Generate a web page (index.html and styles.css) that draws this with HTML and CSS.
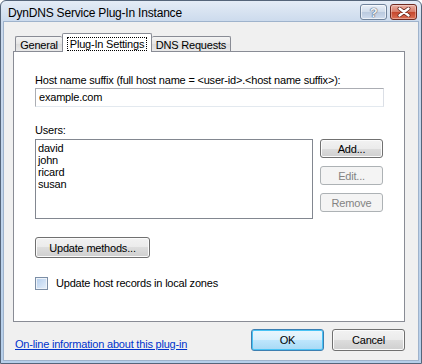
FILE: index.html
```html
<!DOCTYPE html>
<html lang="en">
<head>
    <meta charset="UTF-8">
    <title>DynDNS Service Plug-In Instance</title>
    <link rel="stylesheet" href="styles.css">
</head>
<body>

<div class="window">
    <div class="titlebar">
        <span class="title">DynDNS Service Plug-In Instance</span>
        <div class="caption-btns">
            <span class="cbtn help">?</span>
            <span class="cbtn close">
                <svg width="14" height="10" viewBox="0 0 14 10">
                    <path d="M2.5 1.5 L11.5 8.5 M11.5 1.5 L2.5 8.5" stroke="#5a1d12" stroke-width="3.8" stroke-linecap="round"/>
                    <path d="M2.5 1.5 L11.5 8.5 M11.5 1.5 L2.5 8.5" stroke="#fff" stroke-width="2.4" stroke-linecap="round"/>
                </svg>
            </span>
        </div>
    </div>

    <div class="client">
        <div class="tabs">
            <div class="tab tab-general">General</div>
            <div class="tab tab-active"><span class="focus">Plug-In Settings</span></div>
            <div class="tab tab-dns">DNS Requests</div>
        </div>

        <div class="panel">
            <div class="field-label">Host name suffix (full host name = &lt;user-id&gt;.&lt;host name suffix&gt;):</div>
            <div class="textbox">example.com</div>

            <div class="users-label">Users:</div>
            <div class="users-row">
                <div class="listbox">
                    <div class="item">david</div>
                    <div class="item">john</div>
                    <div class="item">ricard</div>
                    <div class="item">susan</div>
                </div>
                <div class="side-btns">
                    <button class="btn">Add...</button>
                    <button class="btn" disabled>Edit...</button>
                    <button class="btn" disabled>Remove</button>
                </div>
            </div>

            <button class="btn btn-methods">Update methods...</button>

            <div class="check-row">
                <span class="checkbox"></span>
                <span class="check-text">Update host records in local zones</span>
            </div>
        </div>

        <div class="footer">
            <a class="link" href="#">On-line information about this plug-in</a>
            <div class="footer-btns">
                <button class="btn btn-default">OK</button>
                <button class="btn">Cancel</button>
            </div>
        </div>
    </div>
</div>

</body>
</html>
```

FILE: styles.css
```css
body {
    margin: 0;
    font-family: "Liberation Sans", Arial, sans-serif;
    font-size: 11px;
    letter-spacing: -0.2px;
    color: #000;
}
.window {
    width: 422px;
    height: 364px;
    box-sizing: border-box;
    border: 1px solid #55657a;
    border-radius: 6px 6px 0 0;
    background: linear-gradient(#e4ecf6, #cad9ec 22px, #b6cfea);
    display: flex;
    flex-direction: column;
}
.titlebar {
    height: 21px;
    display: flex;
    align-items: center;
    justify-content: space-between;
    padding: 0 4px 0 7px;
}
.title {
    font-size: 12px;
    color: #000;
    margin-top: 2px;
}
.caption-btns {
    display: flex;
    gap: 3px;
    margin-top: 1px;
}
.cbtn {
    width: 27px;
    height: 16px;
    box-sizing: border-box;
    border-radius: 3px;
    display: flex;
    align-items: center;
    justify-content: center;
}
.help {
    border: 1px solid #70839b;
    background: linear-gradient(#eaf0f8, #cfdbea 50%, #b9c9de 50%, #cfdcee);
    color: #eef2f7;
    font-weight: bold;
    font-size: 13px;
    text-shadow: 0 0 1px #56667c, 0 0 1px #56667c, 0 0 1px #56667c;
    box-shadow: inset 0 0 0 1px rgba(255, 255, 255, 0.6);
}
.close {
    border: 1px solid #6e2a20;
    background: linear-gradient(#eab0a3, #d77a66 50%, #c4452b 50%, #dc7055);
    box-shadow: inset 0 0 0 1px rgba(255, 255, 255, 0.35);
}
.client {
    flex: 1;
    margin: 0 3px 3px 3px;
    background: #f0f0f0;
    box-shadow: 0 0 0 1px #9fb3cc;
    padding: 11px 13px 0 9px;
    display: flex;
    flex-direction: column;
}
.tabs {
    display: flex;
    align-items: flex-end;
    height: 18px;
    margin-left: 2px;
}
.tab {
    box-sizing: border-box;
    height: 15px;
    border: 1px solid #898c95;
    border-bottom: none;
    border-radius: 2px 2px 0 0;
    background: linear-gradient(#f4f4f4, #e6e6e6 50%, #dcdcdc 50%, #e9e9e9);
    display: flex;
    align-items: center;
    justify-content: center;
    padding-top: 1px;
}
.tab-general {
    width: 47px;
    border-right: none;
}
.tab-dns {
    width: 79px;
    border-left: none;
}
.tab-active {
    width: 90px;
    height: 19px;
    margin-bottom: -1px;
    background: #fff;
    position: relative;
    z-index: 1;
    padding-top: 0;
}
.focus {
    border: 1px dotted #000;
    padding: 0 2px;
    line-height: 12px;
    margin-top: 2px;
}
.panel {
    box-sizing: border-box;
    height: 271px;
    border: 1px solid #898c95;
    background: #fff;
    padding: 22px 0 0 21px;
}
.field-label {
    line-height: 13px;
}
.textbox {
    box-sizing: border-box;
    width: 349px;
    height: 19px;
    margin-top: 1px;
    border: 1px solid #abadb3;
    border-right-color: #dbdfe6;
    border-bottom-color: #e3e9ef;
    padding: 0 3px;
    line-height: 17px;
}
.users-label {
    margin-top: 17px;
    line-height: 13px;
}
.users-row {
    display: flex;
    margin-top: 2px;
}
.listbox {
    box-sizing: border-box;
    width: 278px;
    height: 80px;
    border: 1px solid #828790;
    padding: 2px 2px;
}
.item {
    line-height: 12px;
}
.side-btns {
    display: flex;
    flex-direction: column;
    gap: 8px;
    margin-left: 7px;
}
.side-btns .btn {
    width: 63px;
    height: 19px;
}
.btn {
    box-sizing: border-box;
    font-family: "Liberation Sans", Arial, sans-serif;
    font-size: 11px;
    letter-spacing: -0.2px;
    color: #000;
    padding: 0;
    border: 1px solid #707070;
    border-radius: 3px;
    background: linear-gradient(#f2f2f2, #ebebeb 50%, #dddddd 50%, #cfcfcf);
    box-shadow: inset 0 0 0 1px #fbfbfb;
}
.btn:disabled {
    border-color: #adb2b5;
    background: #f4f4f4;
    color: #838383;
    box-shadow: none;
}
.btn-methods {
    display: block;
    width: 115px;
    height: 21px;
    margin-top: 18px;
}
.check-row {
    display: flex;
    align-items: center;
    margin-top: 19px;
}
.checkbox {
    box-sizing: border-box;
    width: 13px;
    height: 13px;
    border: 1px solid #7b8ea6;
    background: linear-gradient(135deg, #b3cdec, #e6f0fb);
    box-shadow: inset 0 0 0 1px #eef3f9;
}
.check-text {
    margin-left: 8px;
    line-height: 13px;
}
.footer {
    display: flex;
    align-items: flex-end;
    justify-content: space-between;
    margin-top: 7px;
    padding-left: 2px;
}
.link {
    color: #0033cc;
    line-height: 13px;
}
.footer-btns {
    display: flex;
    gap: 8px;
}
.footer-btns .btn {
    width: 73px;
    height: 22px;
}
.btn-default {
    border-color: #3c7fb1;
    background: linear-gradient(#eaf6fd, #d9f0fc 50%, #bee6fd 50%, #a7d9f5);
    box-shadow: inset 0 0 0 1px #48c3f5;
}
```
